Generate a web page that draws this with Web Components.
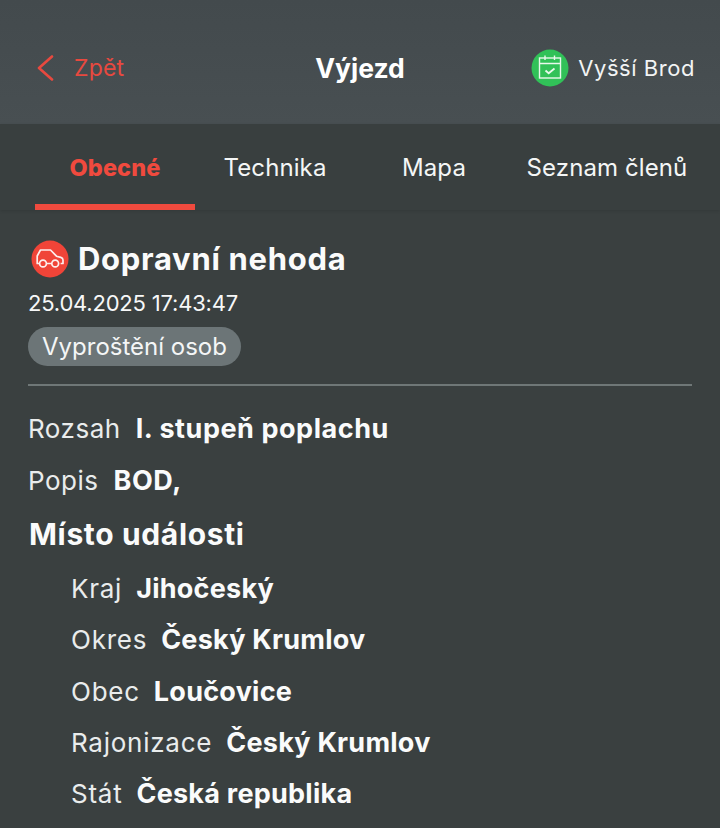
<!DOCTYPE html>
<html lang="cs">
<head>
<meta charset="utf-8">
<title>Výjezd</title>
<style>
    html, body { margin: 0; padding: 0; background: #3a4040; }
    body { width: 720px; height: 828px; overflow: hidden; font-family: "Inter", "Noto Sans", sans-serif; color: #f7f8f8; }
</style>
</head>
<body>
<app-header back="Zpět" heading="Výjezd" station="Vyšší Brod"></app-header>
<tab-bar>
    <tab-item active style="width:160px">Obecné</tab-item>
    <tab-item style="width:160px">Technika</tab-item>
    <tab-item style="width:158px">Mapa</tab-item>
    <tab-item style="width:188px">Seznam členů</tab-item>
</tab-bar>
<event-detail>
    <event-title>Dopravní nehoda</event-title>
    <event-date>25.04.2025 17:43:47</event-date>
    <event-tag>Vyproštění osob</event-tag>
    <hr-line></hr-line>
    <info-row label="Rozsah" value="I. stupeň poplachu"></info-row>
    <info-row label="Popis" value="BOD,"></info-row>
    <section-title>Místo události</section-title>
    <info-row nested label="Kraj" value="Jihočeský"></info-row>
    <info-row nested label="Okres" value="Český Krumlov"></info-row>
    <info-row nested label="Obec" value="Loučovice"></info-row>
    <info-row nested label="Rajonizace" value="Český Krumlov"></info-row>
    <info-row nested label="Stát" value="Česká republika"></info-row>
</event-detail>
<script>
class AppHeader extends HTMLElement
{
    constructor()
    {
        super();
        this.attachShadow({mode: "open"});
    }

    connectedCallback()
    {
        this.shadowRoot.innerHTML = `
        <style>
            :host{
                display: grid;
                grid-template-columns: 1fr auto 1fr;
                align-items: center;
                box-sizing: border-box;
                height: 124px;
                padding: 12px 25px 0 25px;
                background: linear-gradient(#434a4d, #484f52);
            }
            .back{ display: flex; align-items: center; gap: 20px; margin-left: 11px; color: #e8493f; font-size: 23px; letter-spacing: .2px; }
            h1{ margin: 0 0 1px; font-size: 26.5px; font-weight: 700; color: #fff; }
            .station{ display: flex; align-items: center; justify-content: flex-end; gap: 9px; font-size: 22px; color: #f2f4f4; letter-spacing: .55px; }
            svg{ display: block; }
        </style>
        <div class="back">
            <svg width="18" height="26" viewBox="0 0 18 26" fill="none" stroke="#e8493f" stroke-width="2.6"><path d="M16 1.5 3 13l13 11.5" stroke-linecap="round" stroke-linejoin="round"/></svg>
            <span>${this.getAttribute("back")}</span>
        </div>
        <h1>${this.getAttribute("heading")}</h1>
        <div class="station">
            <svg width="38" height="38" viewBox="0 0 38 38">
                <circle cx="19" cy="19" r="18.5" fill="#31c158"/>
                <g fill="none" stroke="#e8f8ec" stroke-width="1.4">
                    <rect x="8.5" y="9" width="21" height="20"/>
                    <path d="M8.5 14.5h21M14 6.5v4.5M23.5 6.5v4.5"/>
                    <path d="M14.5 21.5l3.2 2.8 5.8-4.8" stroke-width="1.8"/>
                </g>
            </svg>
            <span>${this.getAttribute("station")}</span>
        </div>`;
    }
}
customElements.define("app-header", AppHeader);

class TabBar extends HTMLElement
{
    constructor()
    {
        super();
        this.attachShadow({mode: "open"}).innerHTML = `
        <style>
            :host{
                display: flex;
                box-sizing: border-box;
                height: 86px;
                padding-left: 35px;
                background: #393f3f;
                box-shadow: 0 1px 3px rgba(0,0,0,.12);
                position: relative;
            }
        </style>
        <slot></slot>`;
    }
}
customElements.define("tab-bar", TabBar);

class TabItem extends HTMLElement
{
    constructor()
    {
        super();
        this.attachShadow({mode: "open"}).innerHTML = `
        <style>
            :host{
                display: flex;
                align-items: center;
                justify-content: center;
                box-sizing: border-box;
                height: 86px;
                padding-top: 6px;
                border-bottom: 6px solid transparent;
                font-size: 24px;
                letter-spacing: .1px;
                color: #f4f6f6;
                white-space: nowrap;
            }
            :host([active]){
                color: #f04a3e;
                font-weight: 800;
                font-size: 23.5px;
                border-bottom-color: #f04a3e;
            }
        </style>
        <slot></slot>`;
    }
}
customElements.define("tab-item", TabItem);

class EventDetail extends HTMLElement
{
    constructor()
    {
        super();
        this.attachShadow({mode: "open"}).innerHTML = `
        <style>
            :host{ display: block; padding: 30px 28px 0 28px; }
        </style>
        <slot></slot>`;
    }
}
customElements.define("event-detail", EventDetail);

class EventTitle extends HTMLElement
{
    constructor()
    {
        super();
        this.attachShadow({mode: "open"}).innerHTML = `
        <style>
            :host{ display: flex; align-items: center; gap: 9px; padding-left: 3px; height: 38px; font-size: 31px; letter-spacing: .7px; font-weight: 700; color: #fafbfb; white-space: nowrap; }
            svg{ display: block; flex: none; }
            slot{ display: block; margin-bottom: 2px; }
        </style>
        <svg width="38" height="38" viewBox="0 0 38 38">
            <circle cx="19" cy="19" r="18.5" fill="#f04438"/>
            <g fill="none" stroke="#fdeeee" stroke-width="1.7" stroke-linejoin="round">
                <path d="M8.2 23.5H6.2v-7.5L9.5 10h10l6 6.2 4.3 1.2c1.3.4 2.2 1.3 2.2 2.6v3.5h-2.4M15.8 23.5h4.6"/>
                <circle cx="12" cy="23.5" r="3.4"/>
                <circle cx="24.2" cy="23.5" r="3.4"/>
            </g>
        </svg>
        <slot></slot>`;
    }
}
customElements.define("event-title", EventTitle);

class EventDate extends HTMLElement
{
    constructor()
    {
        super();
        this.attachShadow({mode: "open"}).innerHTML = `
        <style>
            :host{ display: block; margin-top: 10px; line-height: 30px; font-size: 22px; letter-spacing: -.2px; color: #f7f8f8; }
        </style>
        <slot></slot>`;
    }
}
customElements.define("event-date", EventDate);

class EventTag extends HTMLElement
{
    constructor()
    {
        super();
        this.attachShadow({mode: "open"}).innerHTML = `
        <style>
            :host{ display: table; margin-top: 9px; padding: 0 14px; height: 39px; line-height: 39px; border-radius: 20px; background: #6c7577; font-size: 24px; color: #f4f6f6; }
        </style>
        <slot></slot>`;
    }
}
customElements.define("event-tag", EventTag);

class HrLine extends HTMLElement
{
    constructor()
    {
        super();
        this.attachShadow({mode: "open"}).innerHTML = `
        <style>
            :host{ display: block; height: 2px; margin: 18px 0 17.4px; background: #6f7777; }
        </style>`;
    }
}
customElements.define("hr-line", HrLine);

class SectionTitle extends HTMLElement
{
    constructor()
    {
        super();
        this.attachShadow({mode: "open"}).innerHTML = `
        <style>
            :host{ display: block; height: 57.4px; line-height: 57.4px; padding-left: 1px; font-size: 30px; letter-spacing: .65px; font-weight: 700; color: #fafbfb; }
        </style>
        <slot></slot>`;
    }
}
customElements.define("section-title", SectionTitle);

class InfoRow extends HTMLElement
{
    constructor()
    {
        super();
        this.attachShadow({mode: "open"});
    }

    connectedCallback()
    {
        this.shadowRoot.innerHTML = `
        <style>
            :host{ display: flex; gap: 15px; height: 51.2px; line-height: 51.2px; font-size: 26px; letter-spacing: .5px; color: #e9ecec; white-space: nowrap; }
            :host([nested]){ padding-left: 43px; letter-spacing: .75px; gap: 14px; }
            b{ font-size: 27px; letter-spacing: .55px; font-weight: 700; color: #fafbfb; }
            :host([nested]) b{ letter-spacing: .25px; }
        </style>
        <span>${this.getAttribute("label")}</span>
        <b>${this.getAttribute("value")}</b>`;
    }
}
customElements.define("info-row", InfoRow);
</script>
</body>
</html>
